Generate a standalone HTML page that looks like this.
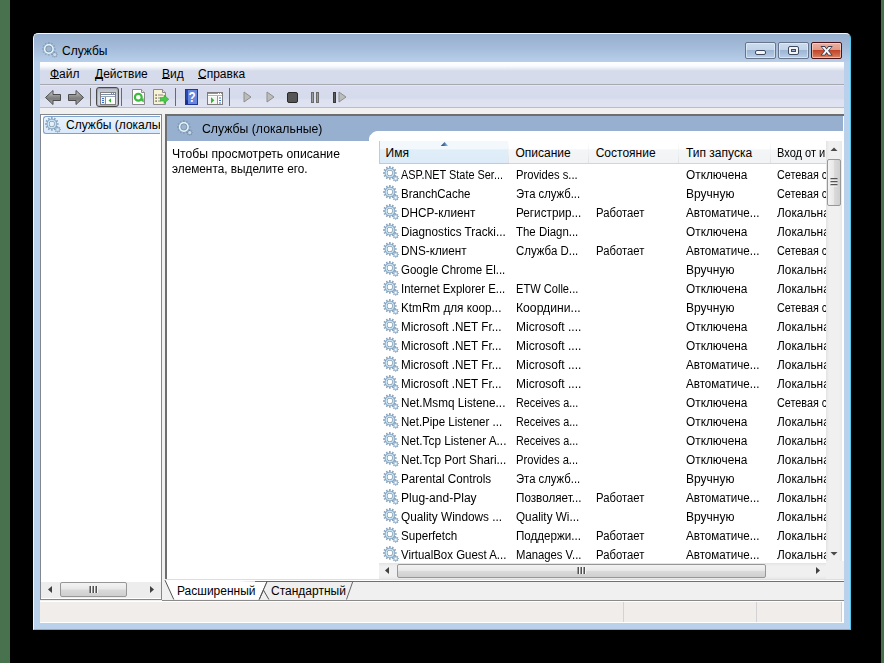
<!DOCTYPE html>
<html><head><meta charset="utf-8">
<style>
*{box-sizing:border-box;margin:0;padding:0}
html,body{width:884px;height:663px;overflow:hidden;background:#000;font-family:"Liberation Sans",sans-serif;font-size:12px;color:#000}
.a{position:absolute}
.t{white-space:pre;line-height:19px}
.c{transform-origin:0 0}
#gl{left:0;top:0;width:10px;height:663px;background:#48714d}
#gr{left:881px;top:0;width:3px;height:663px;background:#48714d}
#win{left:33px;top:33px;width:818px;height:597px;border-radius:5px 5px 0 0;background:linear-gradient(#97b0cf 0,#a2bad7 12px,#b8d0ea 29px,#b9d1ea 60px,#b9d1ea 100%);border:1px solid #f4f8fc;border-bottom-color:#27d3f3;border-right-color:#4ec9ee}
#client{left:40px;top:62px;width:804px;height:561px;background:#f0f0f0}
#menu{left:40px;top:62px;width:804px;height:23px;background:linear-gradient(#fefefe 0,#fafbfd 4px,#e4e8f3 7px,#d6dbec 9px,#d6dbec 100%);border-bottom:1px solid #a6a9b0}
#tool{left:40px;top:85px;width:804px;height:23px;background:linear-gradient(#eef0f8 0,#d8dcee 1px,#d6dbec 13px,#dde1f0 15px,#dee2f1 100%);border-bottom:1px solid #b9bdc8}
#strip{left:40px;top:108px;width:804px;height:6px;background:#f0f0f0}
#lp{left:40px;top:114px;width:122px;height:486px;background:#fff;border:1px solid #828790}
#rp{left:165px;top:114px;width:679px;height:465px;background:#fff;border-left:2px solid #6e6e6e;border-top:2px solid #6e6e6e}
#hdrbar{left:167px;top:116px;width:676px;height:25px;background:#97b0d0}
#tab{left:370px;top:131px;width:473px;height:12px;background:#fff;border-radius:8px 0 0 0}
#status{left:40px;top:601px;width:804px;height:22px;background:#f0edeb;border-top:1px solid #fff;border-bottom:1px solid #fff;border-right:2px solid #fff}
.sep{width:1px;background:#a9adb7;border-right:1px solid #f5f6fb}
.tb{line-height:14px}
.lh{line-height:14px}
.hd{line-height:14px}
</style></head><body>
<svg width="0" height="0" style="position:absolute">
 <defs>
  <symbol id="gear" viewBox="0 0 16 16">
   <mask id="gmk"><rect width="16" height="16" fill="#fff"/><circle cx="6.85" cy="6.95" r="2.45" fill="#000"/><circle cx="12.7" cy="12.6" r="0.9" fill="#000"/></mask>
   <g mask="url(#gmk)">
   <path d="M6.09 1.70 L6.06 0.10 L7.64 0.10 L7.61 1.70 L8.81 2.03 L9.59 0.62 L10.96 1.41 L10.13 2.79 L11.01 3.67 L12.39 2.84 L13.18 4.21 L11.77 4.99 L12.10 6.19 L13.70 6.16 L13.70 7.74 L12.10 7.71 L11.77 8.91 L13.18 9.69 L12.39 11.06 L11.01 10.23 L10.13 11.11 L10.96 12.49 L9.59 13.28 L8.81 11.87 L7.61 12.20 L7.64 13.80 L6.06 13.80 L6.09 12.20 L4.89 11.87 L4.11 13.28 L2.74 12.49 L3.57 11.11 L2.69 10.23 L1.31 11.06 L0.52 9.69 L1.93 8.91 L1.60 7.71 L-0.00 7.74 L-0.00 6.16 L1.60 6.19 L1.93 4.99 L0.52 4.21 L1.31 2.84 L2.69 3.67 L3.57 2.79 L2.74 1.41 L4.11 0.62 L4.89 2.03 Z" fill="#88a2bd"/>
   <circle cx="6.85" cy="6.95" r="4.7" fill="#a9c6de"/>
   <circle cx="6.85" cy="6.95" r="4.0" fill="#cae9f9"/>
   <circle cx="6.85" cy="6.95" r="2.85" fill="#6f7b89"/>
   <path d="M15.05 12.13 L15.96 12.08 L15.96 13.12 L15.05 13.07 L14.70 13.93 L15.37 14.54 L14.64 15.27 L14.03 14.60 L13.17 14.95 L13.22 15.86 L12.18 15.86 L12.23 14.95 L11.37 14.60 L10.76 15.27 L10.03 14.54 L10.70 13.93 L10.35 13.07 L9.44 13.12 L9.44 12.08 L10.35 12.13 L10.70 11.27 L10.03 10.66 L10.76 9.93 L11.37 10.60 L12.23 10.25 L12.18 9.34 L13.22 9.34 L13.17 10.25 L14.03 10.60 L14.64 9.93 L15.37 10.66 L14.70 11.27 Z" fill="#86a1bd"/>
   <circle cx="12.7" cy="12.6" r="1.9" fill="#b7d2e6"/>
   </g>
  </symbol>
  <symbol id="gearf" viewBox="0 0 16 16">
   <path d="M6.16 1.70 L6.13 0.09 L7.57 0.09 L7.54 1.70 L8.88 2.05 L9.66 0.65 L10.91 1.37 L10.08 2.75 L11.05 3.72 L12.43 2.89 L13.15 4.14 L11.75 4.92 L12.10 6.26 L13.71 6.23 L13.71 7.67 L12.10 7.64 L11.75 8.98 L13.15 9.76 L12.43 11.01 L11.05 10.18 L10.08 11.15 L10.91 12.53 L9.66 13.25 L8.88 11.85 L7.54 12.20 L7.57 13.81 L6.13 13.81 L6.16 12.20 L4.82 11.85 L4.04 13.25 L2.79 12.53 L3.62 11.15 L2.65 10.18 L1.27 11.01 L0.55 9.76 L1.95 8.98 L1.60 7.64 L-0.01 7.67 L-0.01 6.23 L1.60 6.26 L1.95 4.92 L0.55 4.14 L1.27 2.89 L2.65 3.72 L3.62 2.75 L2.79 1.37 L4.04 0.65 L4.82 2.05 Z" fill="#5a6f86" fill-opacity="0.35"/>
   <path d="M14.96 12.15 L15.96 12.08 L15.96 13.12 L14.96 13.05 L14.61 13.88 L15.37 14.54 L14.64 15.27 L13.98 14.51 L13.15 14.86 L13.22 15.86 L12.18 15.86 L12.25 14.86 L11.42 14.51 L10.76 15.27 L10.03 14.54 L10.79 13.88 L10.44 13.05 L9.44 13.12 L9.44 12.08 L10.44 12.15 L10.79 11.32 L10.03 10.66 L10.76 9.93 L11.42 10.69 L12.25 10.34 L12.18 9.34 L13.22 9.34 L13.15 10.34 L13.98 10.69 L14.64 9.93 L15.37 10.66 L14.61 11.32 Z" fill="#5a6f86" fill-opacity="0.4"/>
   <circle cx="12.7" cy="12.6" r="1.6" fill="#d8eef8" fill-opacity="0.8"/>
   <circle cx="6.85" cy="6.95" r="4.9" fill="#9db5d2"/>
   <circle cx="6.85" cy="6.95" r="4.2" fill="none" stroke="#e2f6fc" stroke-width="1.6"/>
   <circle cx="6.85" cy="6.95" r="3.0" fill="none" stroke="#6d7888" stroke-opacity="0.55" stroke-width="0.9"/>
  </symbol>
 </defs>
</svg>
<div class="a" id="gl"></div><div class="a" id="gr"></div>
<div class="a" id="win"></div>
<svg class="a" style="left:42px;top:42px" width="16" height="16"><use href="#gearf"/></svg>
<div class="a t tb" style="left:62px;top:44px">Службы</div>
<!-- caption buttons -->
<div class="a" style="left:745px;top:42px;width:31px;height:17px;border:1px solid #67748a;border-radius:2px;box-shadow:inset 0 0 0 1px rgba(235,243,252,.6);background:linear-gradient(#cddcee 0,#c2d4ea 45%,#9db6d4 50%,#a9c0dc 72%,#bbd0e8 100%)"></div>
<div class="a" style="left:755px;top:50px;width:11px;height:5px;background:#f4f4f4;border:1px solid #3e4a60;border-radius:2px"></div>
<div class="a" style="left:778px;top:42px;width:31px;height:17px;border:1px solid #67748a;border-radius:2px;box-shadow:inset 0 0 0 1px rgba(235,243,252,.6);background:linear-gradient(#cddcee 0,#c2d4ea 45%,#9db6d4 50%,#a9c0dc 72%,#bbd0e8 100%)"></div>
<div class="a" style="left:788px;top:46px;width:11px;height:9px;background:#f4f4f4;border:1px solid #3e4a60;border-radius:2px"></div>
<div class="a" style="left:791px;top:49px;width:5px;height:3px;background:#9cb4d4;border:1px solid #3e4a60"></div>
<div class="a" style="left:811px;top:42px;width:31px;height:17px;border:1px solid #4a1418;border-radius:2px;box-shadow:inset 0 0 0 1px rgba(255,230,220,.55);background:linear-gradient(#eab0a2 0,#e39a88 45%,#c2452a 50%,#cf6848 80%,#db8a70 100%)"></div>
<svg class="a" style="left:820px;top:45px" width="14" height="12"><path d="M0.4 1 L5 1 L6.6 3.2 L8.2 1 L12.8 1 L9 5.8 L12.8 10.6 L8.2 10.6 L6.6 8.4 L5 10.6 L0.4 10.6 L4.2 5.8 Z" fill="#3a3d50"/><path d="M1.9 1.9 L4.6 1.9 L6.6 4.6 L8.6 1.9 L11.3 1.9 L8 5.8 L11.3 9.7 L8.6 9.7 L6.6 7 L4.6 9.7 L1.9 9.7 L5.2 5.8 Z" fill="#f6f6f6"/></svg>

<div class="a" id="client"></div>
<div class="a" id="menu"></div>
<div class="a t tb" style="left:50px;top:67px">Файл</div>
<div class="a t tb" style="left:95px;top:67px">Действие</div>
<div class="a t tb" style="left:162px;top:67px">Вид</div>
<div class="a t tb" style="left:198px;top:67px">Справка</div>
<div class="a" style="left:50px;top:78px;width:9px;height:1px;background:#000"></div>
<div class="a" style="left:95px;top:78px;width:8px;height:1px;background:#000"></div>
<div class="a" style="left:162px;top:78px;width:8px;height:1px;background:#000"></div>
<div class="a" style="left:198px;top:78px;width:8px;height:1px;background:#000"></div>
<div class="a" id="tool"></div>
<div class="a" id="strip"></div>
<!-- toolbar icons -->
<svg class="a" style="left:44px;top:89px" width="18" height="17">
 <defs><linearGradient id="ag" x1="0" y1="0" x2="0" y2="1"><stop offset="0" stop-color="#d2d2d2"/><stop offset="0.45" stop-color="#8a8a8a"/><stop offset="0.6" stop-color="#7c7c7c"/><stop offset="1" stop-color="#b5b5b5"/></linearGradient></defs>
 <path d="M1.5 8.5 L9 1.5 L9 5.5 L16.5 5.5 L16.5 11.5 L9 11.5 L9 15.5 Z" fill="url(#ag)" stroke="#4c4c4c" stroke-width="1" stroke-linejoin="round"/>
</svg>
<svg class="a" style="left:67px;top:89px" width="18" height="17">
 <path d="M16.5 8.5 L9 1.5 L9 5.5 L1.5 5.5 L1.5 11.5 L9 11.5 L9 15.5 Z" fill="url(#ag)" stroke="#4c4c4c" stroke-width="1" stroke-linejoin="round"/>
</svg>
<div class="a" style="left:90px;top:88px;width:1px;height:18px;background:#6a6a6a"></div>
<div class="a" style="left:96px;top:87px;width:23px;height:20px;border:1px solid #4a4a4a;border-radius:3px;box-shadow:inset 0 0 0 1px rgba(110,110,120,.35);background:linear-gradient(#b4bac6,#c9cedb 35%,#d5d9e6)"></div>
<svg class="a" style="left:100px;top:92px" width="16" height="13">
 <rect x="0.5" y="0.5" width="15" height="12" fill="#fff" stroke="#808080"/>
 <line x1="1" y1="2.5" x2="15" y2="2.5" stroke="#7d8ea8"/>
 <rect x="11" y="1" width="1" height="1" fill="#7d8ea8"/><rect x="13" y="1" width="1" height="1" fill="#7d8ea8"/>
 <line x1="1" y1="4.5" x2="15" y2="4.5" stroke="#9aa6b8"/>
 <rect x="1" y="5" width="4" height="7" fill="#eef2f8"/>
 <line x1="5.5" y1="5" x2="5.5" y2="12" stroke="#7d8ea8"/>
 <rect x="2" y="6" width="2" height="1" fill="#3d6fd1"/><rect x="2" y="8" width="2" height="1" fill="#3d6fd1"/><rect x="2" y="10" width="2" height="1" fill="#3d6fd1"/>
 <path d="M8.5 8.5 L11 6.2 L11 10.8 Z" fill="#2fb52f"/>
</svg>
<div class="a" style="left:121px;top:88px;width:1px;height:18px;background:#6a6a6a"></div>
<svg class="a" style="left:131px;top:89px" width="15" height="17">
 <path d="M1.5 0.5 L10.5 0.5 L13.5 3.5 L13.5 15.5 L1.5 15.5 Z" fill="#fdfdfd" stroke="#8a8a8a"/>
 <path d="M10.5 0.5 L10.5 3.5 L13.5 3.5" fill="#e8e8e8" stroke="#8a8a8a"/>
 <circle cx="7.3" cy="8.3" r="3.4" fill="none" stroke="#3dbb3d" stroke-width="2.2"/>
 <path d="M8.2 10.2 L12.8 13.6 L12.6 9.2 Z" fill="#3dbb3d"/>
</svg>
<svg class="a" style="left:152px;top:89px" width="18" height="17">
 <path d="M1.5 0.5 L10.5 0.5 L13.5 3.5 L13.5 15.5 L1.5 15.5 Z" fill="#f8f3d4" stroke="#8a8a8a"/>
 <path d="M10.5 0.5 L10.5 3.5 L13.5 3.5" fill="#e9e4c8" stroke="#8a8a8a"/>
 <rect x="3.5" y="5.5" width="1.2" height="1.2" fill="#222"/><rect x="3.5" y="8.5" width="1.2" height="1.2" fill="#222"/><rect x="3.5" y="11.5" width="1.2" height="1.2" fill="#222"/>
 <rect x="6" y="5.5" width="5" height="1" fill="#8a8a8a"/><rect x="6" y="8.5" width="3" height="1" fill="#8a8a8a"/><rect x="6" y="11.5" width="3" height="1" fill="#8a8a8a"/>
 <path d="M8.5 8.6 L12 8.6 L12 6 L16.8 10.3 L12 14.6 L12 12 L8.5 12 Z" fill="#4cc94c" stroke="#2f9f2f" stroke-width="0.6"/>
</svg>
<div class="a" style="left:175px;top:88px;width:1px;height:18px;background:#6a6a6a"></div>
<svg class="a" style="left:185px;top:89px" width="13" height="16">
 <rect x="0" y="0" width="13" height="16" fill="#2b47b0"/>
 <rect x="3" y="1" width="9" height="14" fill="#6686e0"/>
 <path d="M0 10 L3 12 L3 15 L0 16 Z" fill="#1c2f88"/>
 <rect x="0.5" y="0.5" width="12" height="15" fill="none" stroke="#1f3598" stroke-width="1"/>
 <text x="7" y="12.6" font-family="Liberation Sans" font-size="14.5" font-weight="bold" fill="#fff" text-anchor="middle" transform="translate(7 0) scale(0.8 1) translate(-7 0)">?</text>
</svg>
<svg class="a" style="left:207px;top:92px" width="16" height="13">
 <rect x="0.5" y="0.5" width="15" height="12" fill="#fff" stroke="#7d7d7d"/>
 <line x1="1" y1="1.5" x2="15" y2="1.5" stroke="#8797b2"/>
 <rect x="11" y="1" width="1" height="1" fill="#fff"/><rect x="13" y="1" width="1" height="1" fill="#fff"/>
 <line x1="1" y1="3.5" x2="15" y2="3.5" stroke="#a9b6cc"/>
 <rect x="1" y="5" width="9" height="7" fill="#f4f4f4"/>
 <line x1="10.5" y1="4" x2="10.5" y2="12" stroke="#8797b2"/>
 <rect x="12" y="5.5" width="2" height="1" fill="#3d6fd1"/><rect x="12" y="8" width="2" height="1" fill="#3d6fd1"/><rect x="12" y="10.5" width="2" height="1" fill="#3d6fd1"/>
 <path d="M4 5.2 L7.3 8.3 L4 11.4 Z" fill="#2fb52f"/>
</svg>
<div class="a" style="left:229px;top:88px;width:1px;height:18px;background:#6a6a6a"></div>
<svg class="a" style="left:243px;top:91px" width="9" height="12"><path d="M1 1 L8 6 L1 11 Z" fill="#bcbcbc" stroke="#8e8e8e" stroke-width="1" stroke-linejoin="round"/></svg>
<svg class="a" style="left:266px;top:91px" width="9" height="12"><path d="M1 1 L8 6 L1 11 Z" fill="#bcbcbc" stroke="#8e8e8e" stroke-width="1" stroke-linejoin="round"/></svg>
<div class="a" style="left:287px;top:92px;width:11px;height:11px;border:1.5px solid #2a2a2a;border-radius:2px;background:#555"></div>
<div class="a" style="left:311px;top:92px;width:3px;height:11px;background:#9a9a9a;border:1px solid #6a6a6a"></div>
<div class="a" style="left:316px;top:92px;width:3px;height:11px;background:#9a9a9a;border:1px solid #6a6a6a"></div>
<div class="a" style="left:333px;top:92px;width:3px;height:11px;background:#5a5a5a;border:1px solid #3a3a3a"></div>
<svg class="a" style="left:338px;top:91px" width="9" height="12"><path d="M1 1 L8 6 L1 11 Z" fill="#bcbcbc" stroke="#8e8e8e" stroke-width="1" stroke-linejoin="round"/></svg>


<!-- left pane -->
<div class="a" id="lp"></div>
<div class="a" style="left:43px;top:116px;width:117px;height:18px;border:1px solid #7da2ce;border-right:none;border-radius:3px 0 0 3px;background:linear-gradient(#eaf3fd,#d9e9fb)"></div>
<svg class="a" style="left:45px;top:117px" width="16" height="16"><use href="#gear"/></svg>
<div class="a t tb" style="left:66px;top:118px;width:94px;overflow:hidden">Службы (локальные)</div>
<div class="a" style="left:41px;top:582px;width:120px;height:16px;background:#ededed"></div>

<!-- right pane -->
<div class="a" id="rp"></div>
<div class="a" id="hdrbar"></div>
<svg class="a" style="left:177px;top:120px" width="16" height="16"><use href="#gearf"/></svg>
<div class="a t tb c" style="left:202px;top:122px;transform:scaleX(1.02)">Службы (локальные)</div>
<svg class="a" style="left:360px;top:126px" width="484" height="18"><path d="M9 18 L9 12 L10 9.5 L13 6.5 L15 5.5 L17 5 L483 5 L483 18 Z" fill="#fff"/></svg>
<div class="a t tb c" style="left:172px;top:147px;transform:scaleX(1.015)">Чтобы просмотреть описание</div>
<div class="a t tb c" style="left:172px;top:162px;transform:scaleX(0.983)">элемента, выделите его.</div>

<!-- list header -->
<div class="a" style="left:379px;top:141px;width:447px;height:23px;background:linear-gradient(#ffffff 0,#ffffff 36%,#f4f5f7 40%,#f2f3f5 100%);border-bottom:1px solid #d5d5d5"></div>
<div class="a" style="left:379px;top:141px;width:130px;height:23px;background:linear-gradient(#f2f8fc 0,#f2f8fc 36%,#e0eef9 40%,#dcebf7 100%);border:1px solid #96d9f9;border-top:none;border-right:none"></div>
<div class="a t hd" style="left:385.6px;top:146px">Имя</div>
<div class="a t hd" style="left:515.5px;top:146px">Описание</div>
<div class="a t hd" style="left:595.7px;top:146px">Состояние</div>
<div class="a t hd" style="left:686px;top:146px">Тип запуска</div>
<div class="a t hd" style="left:777px;top:146px;width:49px;overflow:hidden"><span class="c" style="display:inline-block;transform:scaleX(0.92)">Вход от имени</span></div>
<div class="a" style="left:508px;top:141px;width:1px;height:22px;background:linear-gradient(#fff,#dfe2e6)"></div>
<div class="a" style="left:588px;top:141px;width:1px;height:22px;background:linear-gradient(#fff,#dfe2e6)"></div>
<div class="a" style="left:678px;top:141px;width:1px;height:22px;background:linear-gradient(#fff,#dfe2e6)"></div>
<div class="a" style="left:770px;top:141px;width:1px;height:22px;background:linear-gradient(#fff,#dfe2e6)"></div>
<svg class="a" style="left:440px;top:141px" width="9" height="6"><defs><linearGradient id="sg" x1="0" y1="0" x2="1" y2="0"><stop offset="0" stop-color="#2a3e5c"/><stop offset="0.5" stop-color="#4a7bb0"/><stop offset="1" stop-color="#9fd3f3"/></linearGradient></defs><path d="M0.8 5 L4.6 1 L8.2 5 Z" fill="url(#sg)"/></svg>

<!-- rows -->
<div class="a" style="left:379px;top:164px;width:447px;height:399px;overflow:hidden">
<div style="position:absolute;left:-379px;top:-164px;width:884px;height:663px">
<svg class="a gear" style="left:383px;top:166px" width="16" height="16"><use href="#gear"/></svg>
<div class="a t c" style="left:401.3px;top:166px;transform:scaleX(0.9083);">ASP.NET State Ser...</div>
<div class="a t c" style="left:515.5px;top:166px;transform:scaleX(0.9344);">Provides s...</div>
<div class="a t c" style="left:686px;top:166px;transform:scaleX(0.9873);">Отключена</div>
<div class="a t" style="left:777px;top:166px;width:49px;overflow:hidden"><span class="c" style="display:inline-block;transform:scaleX(0.9)">Сетевая служба</span></div>
<svg class="a gear" style="left:383px;top:185px" width="16" height="16"><use href="#gear"/></svg>
<div class="a t c" style="left:401.3px;top:185px;transform:scaleX(0.9557);">BranchCache</div>
<div class="a t c" style="left:515.5px;top:185px;transform:scaleX(0.9403);">Эта служб...</div>
<div class="a t c" style="left:686px;top:185px;transform:scaleX(0.9995);">Вручную</div>
<div class="a t" style="left:777px;top:185px;width:49px;overflow:hidden"><span class="c" style="display:inline-block;transform:scaleX(0.9)">Сетевая служба</span></div>
<svg class="a gear" style="left:383px;top:204px" width="16" height="16"><use href="#gear"/></svg>
<div class="a t c" style="left:401.3px;top:204px;transform:scaleX(0.9804);">DHCP-клиент</div>
<div class="a t c" style="left:515.5px;top:204px;transform:scaleX(0.9778);">Регистрир...</div>
<div class="a t c" style="left:595.7px;top:204px;transform:scaleX(0.9401);">Работает</div>
<div class="a t c" style="left:686px;top:204px;transform:scaleX(0.9679);">Автоматиче...</div>
<div class="a t" style="left:777px;top:204px;width:49px;overflow:hidden"><span class="c" style="display:inline-block;transform:scaleX(0.99)">Локальная система</span></div>
<svg class="a gear" style="left:383px;top:223px" width="16" height="16"><use href="#gear"/></svg>
<div class="a t c" style="left:401.3px;top:223px;transform:scaleX(0.9751);">Diagnostics Tracki...</div>
<div class="a t c" style="left:515.5px;top:223px;transform:scaleX(0.9530);">The Diagn...</div>
<div class="a t c" style="left:686px;top:223px;transform:scaleX(0.9873);">Отключена</div>
<div class="a t" style="left:777px;top:223px;width:49px;overflow:hidden"><span class="c" style="display:inline-block;transform:scaleX(0.99)">Локальная система</span></div>
<svg class="a gear" style="left:383px;top:242px" width="16" height="16"><use href="#gear"/></svg>
<div class="a t c" style="left:401.3px;top:242px;transform:scaleX(0.9774);">DNS-клиент</div>
<div class="a t c" style="left:515.5px;top:242px;transform:scaleX(0.9548);">Служба D...</div>
<div class="a t c" style="left:595.7px;top:242px;transform:scaleX(0.9401);">Работает</div>
<div class="a t c" style="left:686px;top:242px;transform:scaleX(0.9679);">Автоматиче...</div>
<div class="a t" style="left:777px;top:242px;width:49px;overflow:hidden"><span class="c" style="display:inline-block;transform:scaleX(0.9)">Сетевая служба</span></div>
<svg class="a gear" style="left:383px;top:261px" width="16" height="16"><use href="#gear"/></svg>
<div class="a t c" style="left:401.3px;top:261px;transform:scaleX(0.9594);">Google Chrome El...</div>
<div class="a t c" style="left:686px;top:261px;transform:scaleX(0.9995);">Вручную</div>
<div class="a t" style="left:777px;top:261px;width:49px;overflow:hidden"><span class="c" style="display:inline-block;transform:scaleX(0.99)">Локальная система</span></div>
<svg class="a gear" style="left:383px;top:280px" width="16" height="16"><use href="#gear"/></svg>
<div class="a t c" style="left:401.3px;top:280px;transform:scaleX(0.9476);">Internet Explorer E...</div>
<div class="a t c" style="left:515.5px;top:280px;transform:scaleX(0.9251);">ETW Colle...</div>
<div class="a t c" style="left:686px;top:280px;transform:scaleX(0.9873);">Отключена</div>
<div class="a t" style="left:777px;top:280px;width:49px;overflow:hidden"><span class="c" style="display:inline-block;transform:scaleX(0.99)">Локальная система</span></div>
<svg class="a gear" style="left:383px;top:299px" width="16" height="16"><use href="#gear"/></svg>
<div class="a t c" style="left:401.3px;top:299px;transform:scaleX(0.9788);">KtmRm для коор...</div>
<div class="a t c" style="left:515.5px;top:299px;transform:scaleX(1.0144);">Координи...</div>
<div class="a t c" style="left:686px;top:299px;transform:scaleX(0.9995);">Вручную</div>
<div class="a t" style="left:777px;top:299px;width:49px;overflow:hidden"><span class="c" style="display:inline-block;transform:scaleX(0.9)">Сетевая служба</span></div>
<svg class="a gear" style="left:383px;top:318px" width="16" height="16"><use href="#gear"/></svg>
<div class="a t c" style="left:401.3px;top:318px;transform:scaleX(0.9736);">Microsoft .NET Fr...</div>
<div class="a t c" style="left:515.5px;top:318px;transform:scaleX(0.9993);">Microsoft ....</div>
<div class="a t c" style="left:686px;top:318px;transform:scaleX(0.9873);">Отключена</div>
<div class="a t" style="left:777px;top:318px;width:49px;overflow:hidden"><span class="c" style="display:inline-block;transform:scaleX(0.99)">Локальная система</span></div>
<svg class="a gear" style="left:383px;top:337px" width="16" height="16"><use href="#gear"/></svg>
<div class="a t c" style="left:401.3px;top:337px;transform:scaleX(0.9736);">Microsoft .NET Fr...</div>
<div class="a t c" style="left:515.5px;top:337px;transform:scaleX(0.9993);">Microsoft ....</div>
<div class="a t c" style="left:686px;top:337px;transform:scaleX(0.9873);">Отключена</div>
<div class="a t" style="left:777px;top:337px;width:49px;overflow:hidden"><span class="c" style="display:inline-block;transform:scaleX(0.99)">Локальная система</span></div>
<svg class="a gear" style="left:383px;top:356px" width="16" height="16"><use href="#gear"/></svg>
<div class="a t c" style="left:401.3px;top:356px;transform:scaleX(0.9736);">Microsoft .NET Fr...</div>
<div class="a t c" style="left:515.5px;top:356px;transform:scaleX(0.9993);">Microsoft ....</div>
<div class="a t c" style="left:686px;top:356px;transform:scaleX(0.9679);">Автоматиче...</div>
<div class="a t" style="left:777px;top:356px;width:49px;overflow:hidden"><span class="c" style="display:inline-block;transform:scaleX(0.99)">Локальная система</span></div>
<svg class="a gear" style="left:383px;top:375px" width="16" height="16"><use href="#gear"/></svg>
<div class="a t c" style="left:401.3px;top:375px;transform:scaleX(0.9736);">Microsoft .NET Fr...</div>
<div class="a t c" style="left:515.5px;top:375px;transform:scaleX(0.9993);">Microsoft ....</div>
<div class="a t c" style="left:686px;top:375px;transform:scaleX(0.9679);">Автоматиче...</div>
<div class="a t" style="left:777px;top:375px;width:49px;overflow:hidden"><span class="c" style="display:inline-block;transform:scaleX(0.99)">Локальная система</span></div>
<svg class="a gear" style="left:383px;top:394px" width="16" height="16"><use href="#gear"/></svg>
<div class="a t c" style="left:401.3px;top:394px;transform:scaleX(0.9783);">Net.Msmq Listene...</div>
<div class="a t c" style="left:515.5px;top:394px;transform:scaleX(0.8966);">Receives a...</div>
<div class="a t c" style="left:686px;top:394px;transform:scaleX(0.9873);">Отключена</div>
<div class="a t" style="left:777px;top:394px;width:49px;overflow:hidden"><span class="c" style="display:inline-block;transform:scaleX(0.9)">Сетевая служба</span></div>
<svg class="a gear" style="left:383px;top:413px" width="16" height="16"><use href="#gear"/></svg>
<div class="a t c" style="left:401.3px;top:413px;transform:scaleX(0.9593);">Net.Pipe Listener ...</div>
<div class="a t c" style="left:515.5px;top:413px;transform:scaleX(0.8966);">Receives a...</div>
<div class="a t c" style="left:686px;top:413px;transform:scaleX(0.9873);">Отключена</div>
<div class="a t" style="left:777px;top:413px;width:49px;overflow:hidden"><span class="c" style="display:inline-block;transform:scaleX(0.99)">Локальная система</span></div>
<svg class="a gear" style="left:383px;top:432px" width="16" height="16"><use href="#gear"/></svg>
<div class="a t c" style="left:401.3px;top:432px;transform:scaleX(0.9815);">Net.Tcp Listener A...</div>
<div class="a t c" style="left:515.5px;top:432px;transform:scaleX(0.8966);">Receives a...</div>
<div class="a t c" style="left:686px;top:432px;transform:scaleX(0.9873);">Отключена</div>
<div class="a t" style="left:777px;top:432px;width:49px;overflow:hidden"><span class="c" style="display:inline-block;transform:scaleX(0.99)">Локальная система</span></div>
<svg class="a gear" style="left:383px;top:451px" width="16" height="16"><use href="#gear"/></svg>
<div class="a t c" style="left:401.3px;top:451px;transform:scaleX(0.9816);">Net.Tcp Port Shari...</div>
<div class="a t c" style="left:515.5px;top:451px;transform:scaleX(0.9325);">Provides a...</div>
<div class="a t c" style="left:686px;top:451px;transform:scaleX(0.9873);">Отключена</div>
<div class="a t" style="left:777px;top:451px;width:49px;overflow:hidden"><span class="c" style="display:inline-block;transform:scaleX(0.99)">Локальная система</span></div>
<svg class="a gear" style="left:383px;top:470px" width="16" height="16"><use href="#gear"/></svg>
<div class="a t c" style="left:401.3px;top:470px;transform:scaleX(0.9728);">Parental Controls</div>
<div class="a t c" style="left:515.5px;top:470px;transform:scaleX(0.9417);">Эта служб...</div>
<div class="a t c" style="left:686px;top:470px;transform:scaleX(0.9995);">Вручную</div>
<div class="a t" style="left:777px;top:470px;width:49px;overflow:hidden"><span class="c" style="display:inline-block;transform:scaleX(0.99)">Локальная система</span></div>
<svg class="a gear" style="left:383px;top:489px" width="16" height="16"><use href="#gear"/></svg>
<div class="a t c" style="left:401.3px;top:489px;transform:scaleX(1.0030);">Plug-and-Play</div>
<div class="a t c" style="left:515.5px;top:489px;transform:scaleX(0.9738);">Позволяет...</div>
<div class="a t c" style="left:595.7px;top:489px;transform:scaleX(0.9401);">Работает</div>
<div class="a t c" style="left:686px;top:489px;transform:scaleX(0.9679);">Автоматиче...</div>
<div class="a t" style="left:777px;top:489px;width:49px;overflow:hidden"><span class="c" style="display:inline-block;transform:scaleX(0.99)">Локальная система</span></div>
<svg class="a gear" style="left:383px;top:508px" width="16" height="16"><use href="#gear"/></svg>
<div class="a t c" style="left:401.3px;top:508px;transform:scaleX(0.9844);">Quality Windows ...</div>
<div class="a t c" style="left:515.5px;top:508px;transform:scaleX(0.9770);">Quality Wi...</div>
<div class="a t c" style="left:686px;top:508px;transform:scaleX(0.9995);">Вручную</div>
<div class="a t" style="left:777px;top:508px;width:49px;overflow:hidden"><span class="c" style="display:inline-block;transform:scaleX(0.99)">Локальная система</span></div>
<svg class="a gear" style="left:383px;top:527px" width="16" height="16"><use href="#gear"/></svg>
<div class="a t c" style="left:401.3px;top:527px;transform:scaleX(0.9699);">Superfetch</div>
<div class="a t c" style="left:515.5px;top:527px;transform:scaleX(0.9669);">Поддержи...</div>
<div class="a t c" style="left:595.7px;top:527px;transform:scaleX(0.9401);">Работает</div>
<div class="a t c" style="left:686px;top:527px;transform:scaleX(0.9679);">Автоматиче...</div>
<div class="a t" style="left:777px;top:527px;width:49px;overflow:hidden"><span class="c" style="display:inline-block;transform:scaleX(0.99)">Локальная система</span></div>
<svg class="a gear" style="left:383px;top:546px" width="16" height="16"><use href="#gear"/></svg>
<div class="a t c" style="left:401.3px;top:546px;transform:scaleX(0.9537);">VirtualBox Guest A...</div>
<div class="a t c" style="left:515.5px;top:546px;transform:scaleX(0.9410);">Manages V...</div>
<div class="a t c" style="left:595.7px;top:546px;transform:scaleX(0.9401);">Работает</div>
<div class="a t c" style="left:686px;top:546px;transform:scaleX(0.9679);">Автоматиче...</div>
<div class="a t" style="left:777px;top:546px;width:49px;overflow:hidden"><span class="c" style="display:inline-block;transform:scaleX(0.99)">Локальная система</span></div>

</div></div>

<!-- v scrollbar -->
<div class="a" style="left:826px;top:141px;width:16px;height:420px;background:linear-gradient(90deg,#e3e3e3,#f0f0f0 20%,#f0f0f0 80%,#e8e8e8)"></div>
<svg class="a" style="left:830px;top:146px" width="8" height="6"><path d="M0.5 5 L4 1.5 L7.5 5 Z" fill="#4a4a4a"/></svg>
<div class="a" style="left:827px;top:159px;width:14px;height:47px;border:1px solid #979797;border-radius:2px;background:linear-gradient(90deg,#f3f3f3,#e9e9e9 45%,#d9d9d9 55%,#cfcfcf)"></div>
<svg class="a" style="left:830px;top:177px" width="9" height="10"><g fill="#555"><rect x="0.5" y="1" width="7" height="1.5"/><rect x="0.5" y="4" width="7" height="1.5"/><rect x="0.5" y="7" width="7" height="1.5"/></g><g fill="#f8f8f8"><rect x="0.5" y="2.5" width="7" height="1"/><rect x="0.5" y="5.5" width="7" height="1"/><rect x="0.5" y="8.5" width="7" height="1"/></g></svg>
<svg class="a" style="left:830px;top:551px" width="8" height="6"><path d="M0.5 1 L4 4.5 L7.5 1 Z" fill="#4a4a4a"/></svg>
<!-- h scrollbar -->
<div class="a" style="left:379px;top:563px;width:447px;height:16px;background:linear-gradient(#e3e3e3,#f0f0f0 20%,#f0f0f0 80%,#e8e8e8)"></div>
<div class="a" style="left:826px;top:561px;width:18px;height:18px;background:#f0f0f0"></div>
<svg class="a" style="left:384px;top:566px" width="6" height="9"><path d="M5 1 L1 4.5 L5 8 Z" fill="#404040"/></svg>
<svg class="a" style="left:815px;top:566px" width="6" height="9"><path d="M1 1 L5 4.5 L1 8 Z" fill="#404040"/></svg>
<div class="a" style="left:397px;top:564px;width:369px;height:14px;border:1px solid #979797;border-radius:2px;background:linear-gradient(#f3f3f3,#e9e9e9 45%,#d9d9d9 55%,#cfcfcf)"></div>
<svg class="a" style="left:577px;top:566px" width="9" height="9"><g fill="#505050"><rect x="0.5" y="1" width="1.5" height="7"/><rect x="3.5" y="1" width="1.5" height="7"/><rect x="6.5" y="1" width="1.5" height="7"/></g><g fill="#f8f8f8"><rect x="2" y="1" width="1" height="7"/><rect x="5" y="1" width="1" height="7"/><rect x="8" y="1" width="1" height="7"/></g></svg>

<!-- left pane h scrollbar -->
<svg class="a" style="left:47px;top:585px" width="6" height="9"><path d="M5 1 L1 4.5 L5 8 Z" fill="#404040"/></svg>
<svg class="a" style="left:149px;top:585px" width="6" height="9"><path d="M1 1 L5 4.5 L1 8 Z" fill="#404040"/></svg>
<div class="a" style="left:60px;top:582px;width:67px;height:15px;border:1px solid #979797;border-radius:2px;background:linear-gradient(#f3f3f3,#e9e9e9 45%,#d9d9d9 55%,#cfcfcf)"></div>
<svg class="a" style="left:89px;top:585px" width="9" height="9"><g fill="#505050"><rect x="0.5" y="1" width="1.5" height="7"/><rect x="3.5" y="1" width="1.5" height="7"/><rect x="6.5" y="1" width="1.5" height="7"/></g><g fill="#f8f8f8"><rect x="2" y="1" width="1" height="7"/><rect x="5" y="1" width="1" height="7"/><rect x="8" y="1" width="1" height="7"/></g></svg>

<!-- tabs -->
<div class="a" style="left:166px;top:579px;width:678px;height:1px;background:#dedede"></div>
<div class="a" style="left:166px;top:580px;width:678px;height:1px;background:#fff"></div>
<div class="a" style="left:162px;top:581px;width:682px;height:19px;background:#f0f0f0"></div>
<div class="a" style="left:166px;top:581px;width:678px;height:1px;background:#707070"></div>
<div class="a" style="left:162px;top:579px;width:4px;height:2px;background:#f0f0f0"></div>
<div class="a" style="left:162px;top:600px;width:682px;height:1px;background:#8a8a8a"></div>
<svg class="a" style="left:160px;top:576px" width="200" height="25">
 <path d="M5 4 L13.8 23.5 L99.2 23.5 L107.2 5.3 Z" fill="#fff"/>
 <path d="M5 4.2 L13.8 23.5" fill="none" stroke="#555" stroke-width="1"/>
 <path d="M99.2 23.5 L107.2 5.3" fill="none" stroke="#555" stroke-width="1"/>
 <path d="M103.4 14 L108.9 23.5 L186.5 23.5 L192.8 5.5 L107.2 5.5 Z" fill="#efefef"/>
 <path d="M103.4 14 L108.9 23.5" fill="none" stroke="#555" stroke-width="1"/>
 <path d="M107.2 5.5 L192.8 5.5 L186.5 23.5" fill="none" stroke="#666" stroke-width="1"/>
 <path d="M99.2 23.5 L107.2 5.3" fill="none" stroke="#555" stroke-width="1"/>
</svg>
<div class="a t tb" style="left:177px;top:584px">Расширенный</div>
<div class="a t tb" style="left:271px;top:584px">Стандартный</div>

<!-- status -->
<div class="a" id="status"></div>
<div class="a" style="left:623px;top:602px;width:1px;height:20px;background:#d3d3d6"></div>
<div class="a" style="left:756px;top:602px;width:1px;height:20px;background:#d3d3d6"></div>
<div class="a" style="left:841px;top:602px;width:1px;height:20px;background:#d0d0d0"></div>
</body></html>
